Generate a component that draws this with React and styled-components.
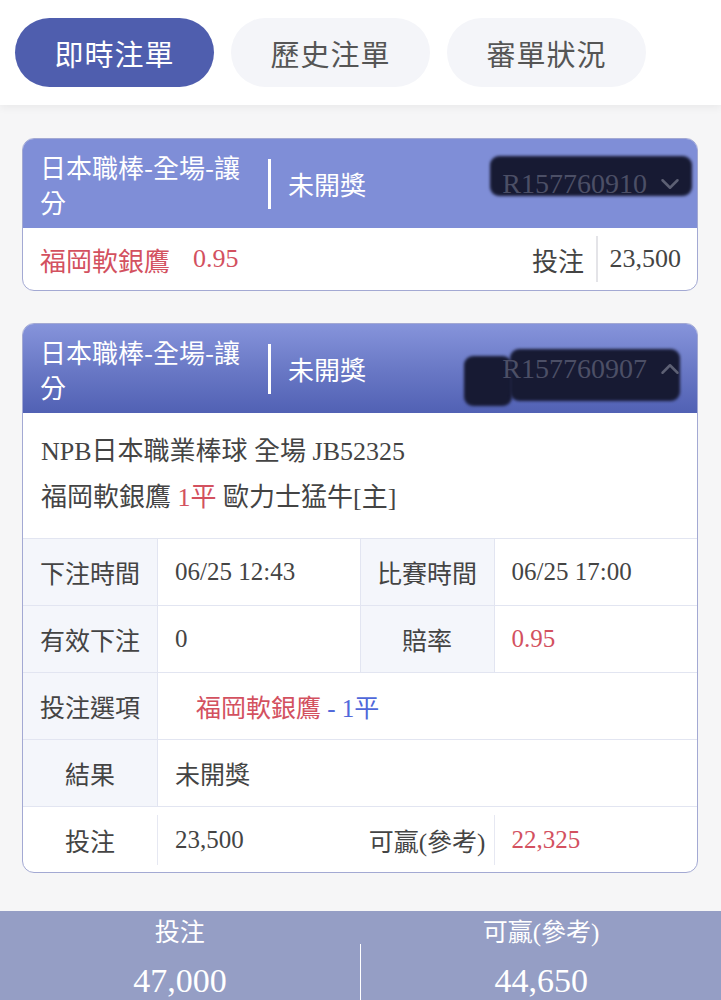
import React from "react";
import styled, { createGlobalStyle } from "styled-components";
import { ChevronDown, ChevronUp } from "lucide-react";

const GlobalStyle = createGlobalStyle`
  * { box-sizing: border-box; }
  body {
    margin: 0;
    background: #f6f6f7;
    font-family: "Liberation Serif", "Noto Sans CJK TC", serif;
    color: #444;
  }
`;

const Page = styled.div`
  min-height: 1000px;
  display: flex;
  flex-direction: column;
`;

const TopBar = styled.div`
  background: #fff;
  padding: 18px 15px;
  display: flex;
  gap: 17px;
  box-shadow: 0 3px 8px rgba(0, 0, 0, 0.05);
`;

const Tab = styled.button`
  width: 199px;
  height: 69px;
  border: none;
  border-radius: 35px;
  font-family: "Noto Sans CJK TC", sans-serif;
  font-size: 29px;
  letter-spacing: 1px;
  background: ${(p) => (p.$active ? "#4f5eae" : "#f4f5f9")};
  color: ${(p) => (p.$active ? "#fff" : "#555")};
`;

const List = styled.div`
  padding: 33px 23px 38px 22px;
  display: flex;
  flex-direction: column;
  gap: 32px;
`;

const Card = styled.div`
  background: #fff;
  border: 1.5px solid #a3a9d3;
  border-radius: 12px;
  overflow: hidden;
`;

const Header = styled.div`
  height: 89px;
  padding: 0 12px 0 17px;
  display: flex;
  align-items: center;
  color: #fff;
  background: ${(p) =>
    p.$gradient
      ? "linear-gradient(180deg, #8694db 0%, #6a79c6 50%, #5161b4 100%)"
      : "#7f8ed7"};
`;

const League = styled.div`
  width: 214px;
  font-family: "Noto Sans CJK TC", sans-serif;
  font-size: 26px;
  line-height: 35px;
`;

const Bar = styled.div`
  width: 3px;
  height: 50px;
  background: #fff;
  margin: 0 17px 0 14px;
`;

const Status = styled.div`
  font-family: "Noto Sans CJK TC", sans-serif;
  font-size: 26px;
`;

const IdWrap = styled.div`
  position: relative;
  margin-left: auto;
  display: flex;
  align-items: center;
  gap: 8px;
  padding-left: 12px;
  height: 36px;
  font-size: 28px;
  color: #4c4f66;
`;

const IdText = styled.span`
  position: relative;
`;

const Blot = styled.span`
  position: absolute;
  left: ${(p) => p.$left}px;
  top: ${(p) => p.$top}px;
  width: ${(p) => p.$w}px;
  height: ${(p) => p.$h}px;
  background: #171a33;
  border-radius: 9px;
  filter: blur(1.5px);
`;

const Chevron = styled.span`
  position: relative;
  display: flex;
  color: #5d6074;
`;

const Summary = styled.div`
  height: 62px;
  padding: 0 16px 0 17px;
  display: flex;
  align-items: center;
  font-size: 26px;
`;

const Red = styled.span`
  color: ${(p) => (p.$blue ? "#5068da" : "#d3515f")};
`;

const Odds = styled(Red)`
  margin-left: 23px;
`;

const Stake = styled.div`
  margin-left: auto;
  display: flex;
  align-items: center;
  color: #444;
`;

const Divider = styled.span`
  width: 1.5px;
  height: 46px;
  background: #e4e4e8;
  margin: 0 12px;
`;

const Info = styled.div`
  padding: 16px 18px 17px;
  font-size: 26px;
  line-height: 46px;
  color: #444;
`;

const Grid = styled.div`
  display: grid;
  grid-template-columns: 135px 1fr 134px 1fr;
  border-top: 1.5px solid #e2e5f1;
`;

const Cell = styled.div`
  height: 67px;
  display: flex;
  align-items: center;
  justify-content: ${(p) => (p.$label ? "center" : "flex-start")};
  padding-left: ${(p) => (p.$label ? 0 : p.$indent || 17)}px;
  background: ${(p) => (p.$label ? "#f4f6fb" : "#fff")};
  grid-column: span ${(p) => p.$span || 1};
  border-bottom: 1.5px solid #e2e5f1;
  border-right: ${(p) => (p.$last ? "none" : "1.5px solid #e2e5f1")};
  font-size: 25px;
  color: ${(p) => p.$color || "#444"};
`;

const TotalRow = styled.div`
  display: grid;
  grid-template-columns: 135px 1fr 134px 1fr;
  align-items: center;
  height: 65px;
`;

const TotalCell = styled.div`
  height: 50px;
  display: flex;
  align-items: center;
  justify-content: ${(p) => (p.$label ? "center" : "flex-start")};
  padding-left: ${(p) => (p.$label ? 0 : 17)}px;
  border-right: ${(p) => (p.$line ? "1.5px solid #e6e8f2" : "none")};
  font-size: 25px;
  color: ${(p) => p.$color || "#444"};
`;

const Footer = styled.div`
  margin-top: auto;
  background: #959ec5;
  color: #fff;
  display: grid;
  grid-template-columns: 1fr 1.5px 1fr;
  align-items: center;
  padding: 4px 0 8px;
`;

const FooterCol = styled.div`
  display: flex;
  flex-direction: column;
  align-items: center;
`;

const FooterLabel = styled.div`
  font-size: 25px;
  line-height: 36px;
`;

const FooterValue = styled.div`
  font-size: 34px;
  line-height: 46px;
  margin-top: 7px;
`;

const FooterLine = styled.div`
  height: 60px;
  background: #fff;
  align-self: end;
`;

function CardHeader({ gradient, id, open, blots }) {
  return (
    <Header $gradient={gradient}>
      <League>日本職棒-全場-讓分</League>
      <Bar />
      <Status>未開獎</Status>
      <IdWrap>
        {blots.map((b, i) => (
          <Blot key={i} $left={b[0]} $top={b[1]} $w={b[2]} $h={b[3]} />
        ))}
        <IdText>{id}</IdText>
        <Chevron>
          {open ? <ChevronUp size={30} /> : <ChevronDown size={30} />}
        </Chevron>
      </IdWrap>
    </Header>
  );
}

export default function App() {
  return (
    <Page>
      <GlobalStyle />
      <TopBar>
        <Tab $active>即時注單</Tab>
        <Tab>歷史注單</Tab>
        <Tab>審單狀況</Tab>
      </TopBar>

      <List>
        <Card>
          <CardHeader id="R157760910" blots={[[0, -10, 202, 40]]} />
          <Summary>
            <Red>福岡軟銀鷹</Red>
            <Odds>0.95</Odds>
            <Stake>
              投注
              <Divider />
              23,500
            </Stake>
          </Summary>
        </Card>

        <Card>
          <CardHeader
            gradient
            open
            id="R157760907"
            blots={[
              [-26, 5, 48, 50],
              [20, -2, 170, 52],
            ]}
          />
          <Info>
            <div>NPB日本職業棒球 全場 JB52325</div>
            <div>
              福岡軟銀鷹 <Red>1平</Red> 歐力士猛牛[主]
            </div>
          </Info>
          <Grid>
            <Cell $label>下注時間</Cell>
            <Cell>06/25 12:43</Cell>
            <Cell $label>比賽時間</Cell>
            <Cell $last>06/25 17:00</Cell>

            <Cell $label>有效下注</Cell>
            <Cell>0</Cell>
            <Cell $label>賠率</Cell>
            <Cell $last $color="#d3515f">0.95</Cell>

            <Cell $label>投注選項</Cell>
            <Cell $span={3} $last $indent={38}>
              <Red>福岡軟銀鷹</Red>
              <Red $blue>&nbsp;- 1平</Red>
            </Cell>

            <Cell $label>結果</Cell>
            <Cell $span={3} $last>未開獎</Cell>
          </Grid>
          <TotalRow>
            <TotalCell $label $line>投注</TotalCell>
            <TotalCell>23,500</TotalCell>
            <TotalCell $label $line>可贏(參考)</TotalCell>
            <TotalCell $color="#d3515f">22,325</TotalCell>
          </TotalRow>
        </Card>
      </List>

      <Footer>
        <FooterCol>
          <FooterLabel>投注</FooterLabel>
          <FooterValue>47,000</FooterValue>
        </FooterCol>
        <FooterLine />
        <FooterCol>
          <FooterLabel>可贏(參考)</FooterLabel>
          <FooterValue>44,650</FooterValue>
        </FooterCol>
      </Footer>
    </Page>
  );
}
